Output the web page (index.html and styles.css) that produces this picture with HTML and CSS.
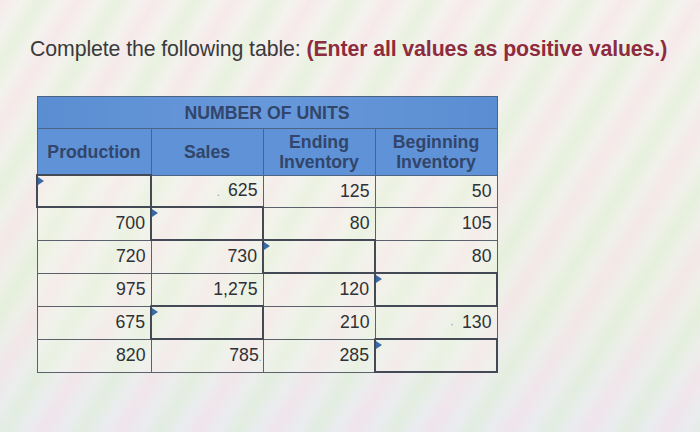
FILE: index.html
```html
<!DOCTYPE html>
<html lang="en">
<head>
<meta charset="utf-8">
<title>Units table</title>
<link rel="stylesheet" href="styles.css">
</head>
<body>
<div class="page">
  <p class="prompt">Complete the following table: <strong class="note">(Enter all values as positive values.)</strong></p>
  <table class="units">
    <colgroup>
      <col class="c1"><col class="c2"><col class="c3"><col class="c4">
    </colgroup>
    <thead>
      <tr class="h1"><th colspan="4">NUMBER OF UNITS</th></tr>
      <tr class="h2"><th>Production</th><th>Sales</th><th>Ending<br>Inventory</th><th>Beginning<br>Inventory</th></tr>
    </thead>
    <tbody>
      <tr class="first"><td class="in"><span class="flag"></span></td><td><span class="dot">.</span>625</td><td>125</td><td>50</td></tr>
      <tr><td>700</td><td class="in"><span class="flag"></span></td><td>80</td><td>105</td></tr>
      <tr><td>720</td><td>730</td><td class="in"><span class="flag"></span></td><td>80</td></tr>
      <tr><td>975</td><td>1,275</td><td>120</td><td class="in"><span class="flag"></span></td></tr>
      <tr><td>675</td><td class="in"><span class="flag"></span></td><td>210</td><td><span class="dot">·</span>130</td></tr>
      <tr><td>820</td><td>785<span class="dot2">.</span></td><td>285</td><td class="in"><span class="flag"></span></td></tr>
    </tbody>
  </table>
</div>
</body>
</html>
```
FILE: styles.css
```css
html, body {
  margin: 0;
  padding: 0;
}
body {
  width: 700px;
  height: 432px;
  overflow: hidden;
  font-family: "Liberation Sans", Arial, sans-serif;
  background-color: #eff0ea;
  background-image:
    repeating-linear-gradient(122deg, rgba(255, 210, 228, 0.3) 0px, rgba(255, 255, 255, 0) 18px, rgba(212, 238, 196, 0.35) 34px, rgba(255, 255, 255, 0) 50px, rgba(255, 210, 228, 0.3) 66px),
    linear-gradient(180deg, #f4f3ee 0%, #eef0e8 70%, #e9ecf0 100%);
}
.page {
  padding: 37px 0 0 30px;
}
.prompt {
  margin: 0;
  font-family: "Liberation Sans", Arial, sans-serif;
  font-size: 21.3px;
  line-height: 24px;
  color: #3a3a3c;
  letter-spacing: -0.1px;
}
.note {
  color: #8c2c3e;
  font-weight: bold;
}
.units {
  margin: 35px 0 0 6px;
  border-collapse: collapse;
  table-layout: fixed;
  width: 460px;
  font-size: 17.7px;
  color: #2f3135;
}
.c1 { width: 114px; }
.c2 { width: 112px; }
.c3 { width: 112px; }
.c4 { width: 122px; }
.units th {
  background: #5f92d7;
  color: #32456a;
  font-weight: bold;
  font-size: 17.7px;
  line-height: 20px;
  border: 1.5px solid #4d6384;
  text-align: center;
  padding: 0 2px;
}
.h1 th {
  height: 31px;
  background: linear-gradient(90deg, #5b8dd2, #6798da 50%, #5b8dd2);
}
.h2 th {
  height: 45px;
}
.units td {
  position: relative;
  height: 31px;
  border: 1.5px solid #5a606c;
  text-align: right;
  padding: 0 5px 0 4px;
  background: rgba(250, 248, 240, 0.3);
}
.units tr.first td {
  height: 30px;
}
.units td.in {
  border: 2.5px solid #434955;
}
.flag {
  position: absolute;
  left: 0;
  top: 1px;
  width: 0;
  height: 0;
  border-top: 4px solid transparent;
  border-bottom: 4px solid transparent;
  border-left: 6px solid #3a6aa6;
}
.dot {
  color: #9aa0a8;
  margin-right: 8px;
  font-size: 12px;
}
.dot2 {
  color: #8a8f98;
  font-size: 10px;
  margin-right: -4px;
}
```
